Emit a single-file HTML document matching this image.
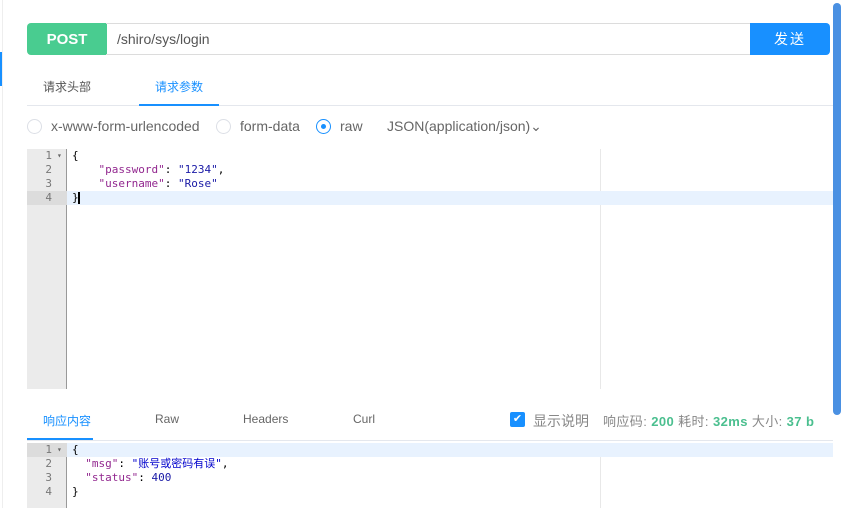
<!DOCTYPE html>
<html><head><meta charset="utf-8"><style>
*{margin:0;padding:0;box-sizing:border-box}
body{width:842px;height:508px;background:#fff;position:relative;overflow:hidden;font-family:"Liberation Sans","Noto Sans CJK SC",sans-serif;font-size:13px;color:#606266}
.a{position:absolute}
.code{font-family:"DejaVu Sans Mono","Liberation Mono",monospace;font-size:11px;line-height:14px;white-space:pre}
.ln{width:40px;text-align:right;padding-right:15px;color:#777}
.k{color:#92278f}
.s{color:#1a1aa6}
.g{color:#4bbf8f;font-weight:bold}
.radio{width:15px;height:15px;border:1px solid #dcdfe6;border-radius:50%}
</style></head><body>
<div class="a" style="left:2px;top:0;width:1px;height:508px;background:#eee"></div>
<div class="a" style="left:0;top:52px;width:2px;height:34px;background:#1890ff"></div>
<div class="a" style="left:833px;top:3px;width:8px;height:412px;background:#4a90e2;border-radius:4px"></div>

<div class="a" style="left:27px;top:23px;width:80px;height:32px;background:#49cc90;border-radius:4px 0 0 4px;color:#fff;font-weight:bold;font-size:15px;padding-top:8px;text-align:center">POST</div>
<div class="a" style="left:106px;top:23px;width:645px;height:32px;border:1px solid #dcdcdc;border-left:none;line-height:30px;padding-left:11px;font-size:14px;color:#555">/shiro/sys/login</div>
<div class="a" style="left:750px;top:23px;width:80px;height:32px;background:#1890ff;border-radius:0 4px 4px 0;color:#fff;font-size:14px;line-height:32px;text-align:center;letter-spacing:2px">发送</div>

<div class="a" style="left:43px;top:78px;font-size:12px;color:#555">请求头部</div>
<div class="a" style="left:155px;top:78px;font-size:12px;color:#1890ff">请求参数</div>
<div class="a" style="left:27px;top:105px;width:806px;height:1px;background:#e4e7ed"></div>
<div class="a" style="left:139px;top:104px;width:80px;height:2px;background:#1890ff"></div>

<div class="a radio" style="left:27px;top:119px"></div>
<div class="a" style="left:51px;top:118px;font-size:14px;color:#666">x-www-form-urlencoded</div>
<div class="a radio" style="left:216px;top:119px"></div>
<div class="a" style="left:240px;top:118px;font-size:14px;color:#666">form-data</div>
<div class="a radio" style="left:316px;top:119px;border-color:#1890ff"><div style="width:5px;height:5px;background:#1890ff;border-radius:50%;margin:4px"></div></div>
<div class="a" style="left:340px;top:118px;font-size:14px;color:#666">raw</div>
<div class="a" style="left:387px;top:118px;font-size:14px;color:#666">JSON(application/json)⌄</div>

<div class="a" style="left:27px;top:149px;width:40px;height:240px;background:#ebebeb;border-right:1px solid #999"></div>
<div class="a" style="left:600px;top:149px;width:1px;height:240px;background:#e8e8e8"></div>
<div class="a" style="left:67px;top:191px;width:766px;height:14px;background:#e8f2fe"></div>
<div class="a" style="left:27px;top:191px;width:40px;height:14px;background:#dcdcdc"></div>
<div class="a code ln" style="left:27px;top:149px">1<br>2<br>3<br>4</div>
<div class="a code" style="left:57px;top:149px;font-size:8px;color:#666">▾</div>
<div class="a code" style="left:72px;top:149px;color:#000">{
    <span class="k">"password"</span>: <span class="s">"1234"</span>,
    <span class="k">"username"</span>: <span class="s">"Rose"</span>
}</div>
<div class="a" style="left:78px;top:192px;width:2px;height:12px;background:#000"></div>

<div class="a" style="left:43px;top:412px;font-size:12px;color:#1890ff">响应内容</div>
<div class="a" style="left:155px;top:412px;font-size:12px;color:#666">Raw</div>
<div class="a" style="left:243px;top:412px;font-size:12px;color:#666">Headers</div>
<div class="a" style="left:353px;top:412px;font-size:12px;color:#666">Curl</div>
<div class="a" style="left:27px;top:440px;width:806px;height:1px;background:#e4e7ed"></div>
<div class="a" style="left:27px;top:438px;width:66px;height:2px;background:#1890ff"></div>
<div class="a" style="left:510px;top:412px;width:15px;height:15px;background:#1890ff;border-radius:2px;color:#fff;font-size:11px;line-height:15px;text-align:center">✔</div>
<div class="a" style="left:533px;top:411px;font-size:14px;color:#888">显示说明</div>
<div class="a" style="left:603px;top:411px;font-size:13px;color:#888;white-space:nowrap;letter-spacing:0.4px">响应码: <span class="g">200</span> 耗时: <span class="g">32ms</span> 大小: <span class="g">37 b</span></div>

<div class="a" style="left:27px;top:443px;width:40px;height:65px;background:#ebebeb;border-right:1px solid #999"></div>
<div class="a" style="left:600px;top:443px;width:1px;height:65px;background:#e8e8e8"></div>
<div class="a" style="left:67px;top:443px;width:766px;height:14px;background:#e8f2fe"></div>
<div class="a" style="left:27px;top:443px;width:40px;height:14px;background:#dcdcdc"></div>
<div class="a code ln" style="left:27px;top:443px">1<br>2<br>3<br>4</div>
<div class="a code" style="left:57px;top:443px;font-size:8px;color:#666">▾</div>
<div class="a code" style="left:72px;top:443px;color:#000">{
  <span class="k">"msg"</span>: <span class="s" style="color:#00c;font-family:'DejaVu Sans Mono','Noto Sans CJK SC',monospace">"账号或密码有误"</span>,
  <span class="k">"status"</span>: <span style="color:#1a1aa6">400</span>
}</div>
</body></html>
